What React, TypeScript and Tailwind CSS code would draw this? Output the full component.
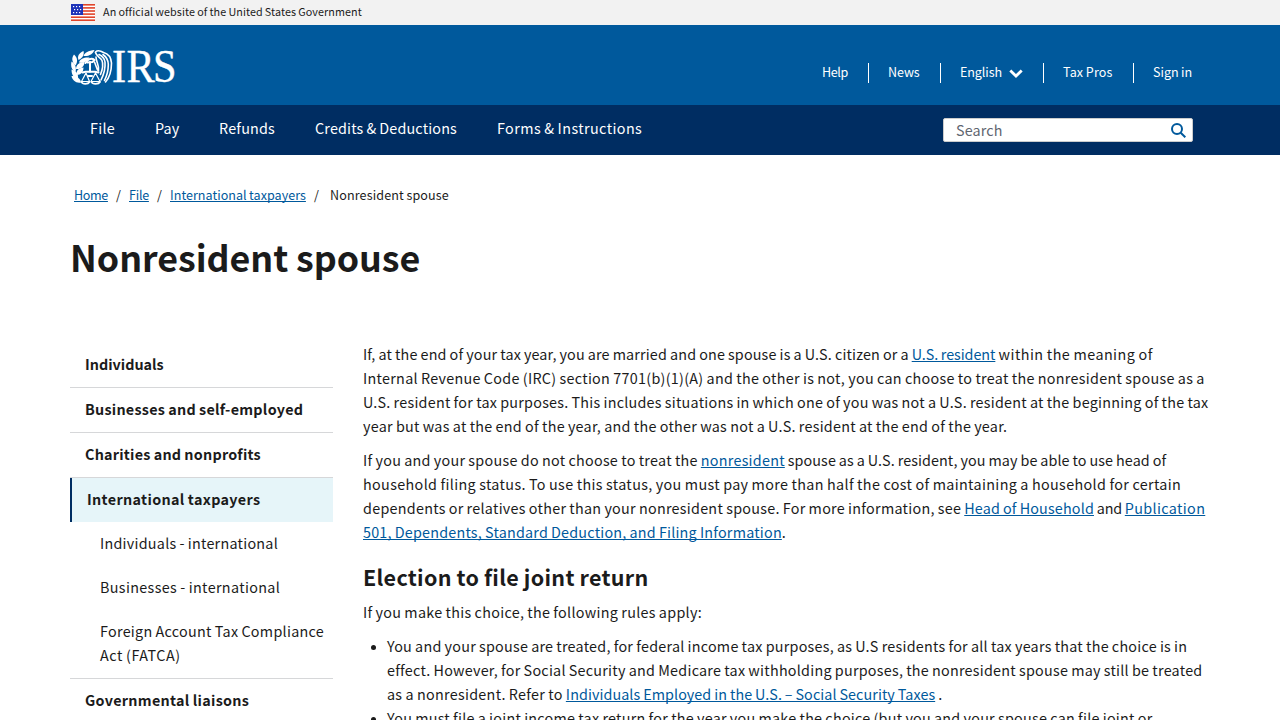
import React from "react";

function Link({ children, t = "" }: { children: React.ReactNode; t?: string }) {
  return (
    <a href="#" className={`text-[#00599c] underline decoration-1 underline-offset-[1px] [text-decoration-skip-ink:none] ${t}`}>
      {children}
    </a>
  );
}

function Line({ children, t = "" }: { children: React.ReactNode; t?: string }) {
  return <span className={`block whitespace-nowrap ${t}`}>{children}</span>;
}

function Flag() {
  return (
    <svg width="24" height="17" viewBox="0 0 24 17">
      <rect width="24" height="17" fill="#fff" />
      {[0, 3.1, 6.2, 9.3, 12.4, 15.4].map((y) => (
        <rect key={y} y={y} width="24" height="1.6" fill="#e0442a" />
      ))}
      <rect width="12" height="11" fill="#1d33b8" />
      {[2, 5, 8].map((y) =>
        [2, 5, 8].map((x) => <rect key={`${x}-${y}`} x={x + (y === 5 ? 1 : 0)} y={y} width="1.2" height="1.2" fill="#fff" />),
      )}
    </svg>
  );
}

function Logo() {
  return (
    <svg className="overflow-visible" width="112" height="44" viewBox="0 0 112 44" fill="none" stroke="#fff" strokeLinecap="round" strokeLinejoin="round">
      <g fill="#fff" stroke="none">
        <path d="M12.500 7c1-3.500 5-5.500 11-6-1.500 4-5.500 6.500-11 6z" />
        <path d="M7.500 11c-1.500-4 .500-7 5-9 1 4-1 7-5 9z" />
        <path d="M8 13.500c1-4 5.500-5.500 10.500-5-2 4-6 6-10.500 5z" />
        <path d="M4.500 16.500C.500 13 .500 8.500 3 5.500c3.500 3 4 7 1.500 11z" />
        <path d="M5 20c0-4 3-7 8.500-7 0 4.500-3.500 7.500-8.500 7z" />
        <path d="M4.500 23C.500 21-.500 17 .500 12.500c4 2.500 5 6 4 10.500z" />
        <path d="M5.500 26c-.500-4.500 2-7 7-7.500 0 4.500-2.500 7.500-7 7.500z" />
        <path d="M7 30c-4.500-1-6.500-4.500-6.500-9.500 5 1.500 7 4.500 6.500 9.500z" />
        <path d="M10 33.500c-5 1-8.500-2-9.500-6.500 5.500 0 9 2.500 9.500 6.500z" />
      </g>
      <g strokeWidth="1.600">
        <path d="M24.500 3c2.500-2.500 5.500-1 8 .500 4 1 7.500 4.500 8 10.500 0 8-1.500 14-6 19" />
        <path d="M24.500 3.500c1 4 5 5 6.500 8 1.500 4 .500 9-1.500 14" />
        <path d="M28 5.500c3 1.500 5.500 3.500 6 7.500.500 6-1.500 13-4 18" />
        <path d="M32 5.500c3.500 2.500 5.300 5 5.300 10 0 6-1.300 11-3.800 16" />
        <path d="M25 8c0 5 3.500 8 2.500 14M23.500 13l3 8" />
        <path d="M14.500 14c1-3.500 6-5.500 9-3l-2 2-5 .500" strokeWidth="2" />
        <path d="M19 13v10M11.500 23.500c3-1.200 12-1.200 16 0M17 27h4" strokeWidth="2" />
        <path d="m15 24-4.500 8.500h8zM24.500 24l-4.500 8.500h9z" strokeWidth="1.200" />
        <path d="M10.500 33c1 2.500 6.500 2.500 8 0M20.500 33c1 2.500 7 2.500 8.500 0" strokeWidth="1.800" />
      </g>
      <text transform="translate(41 33.300) scale(.93 1)" x="0 15.500 44" y="0" fontSize="45.500" fill="#fff" strokeWidth="0.400" fontFamily="Liberation Serif, serif">
        IRS
      </text>
    </svg>
  );
}

const utility = [
  { label: "Help", cls: "w-[46px] tracking-[-0.4px]" },
  { label: "News", cls: "w-[72px] border-l pl-[19px] tracking-[-0.1px]" },
  { label: "English", cls: "w-[103px] border-l pl-[19px] tracking-[-0.1px]", arrow: true },
  { label: "Tax Pros", cls: "w-[90px] border-l pl-[19px] tracking-[0.15px]" },
  { label: "Sign in", cls: "w-[60px] border-l pl-[19px] tracking-[0px]" },
];

const nav = [
  { label: "File", cls: "w-[65px] tracking-[0.3px]" },
  { label: "Pay", cls: "w-[64px] tracking-[0.15px]" },
  { label: "Refunds", cls: "w-[96px] tracking-[0.2px]" },
  { label: "Credits & Deductions", cls: "w-[182px] tracking-[0.16px]" },
  { label: "Forms & Instructions", cls: "w-[160px] tracking-[0.41px]" },
];

export default function App() {
  return (
    <div className="h-[720px] w-[1280px] overflow-hidden bg-white font-['Noto_Sans_CJK_SC',sans-serif] text-[14.35px] leading-6 text-[#1b1b1b] [word-spacing:-0.4px]">
      <div className="flex h-[25px] items-center bg-[#f2f2f2] pl-[71px] text-[10.75px]">
        <Flag />
        <span className="mb-0.5 ml-2 whitespace-nowrap tracking-[0.1px]">An official website of the United States Government</span>
      </div>
      <header className="flex h-20 justify-between bg-[#00599c] pl-[71px] pr-[87px] text-white">
        <div className="pt-6">
          <Logo />
        </div>
        <ul className="flex pt-[38px] text-[12.55px] leading-5">
          {utility.map((u) => (
            <li key={u.label} className={`flex h-5 items-center whitespace-nowrap border-white ${u.cls}`}>
              <span className="mb-0.5">{u.label}</span>
              {u.arrow && (
                <svg className="ml-[7px]" width="14" height="9" viewBox="0 0 14 9" fill="none" stroke="#fff" strokeWidth="2.8">
                  <path d="M1.300 1.500 7 7l5.700-5.500" />
                </svg>
              )}
            </li>
          ))}
        </ul>
      </header>
      <nav className="flex h-[50px] justify-between bg-[#002d62] pl-[90px] pr-[87px] text-white">
        <ul className="flex pt-[11px]">
          {nav.map((n) => (
            <li key={n.label} className={`whitespace-nowrap ${n.cls}`}>
              {n.label}
            </li>
          ))}
        </ul>
        <div className="mt-[13px] flex h-6 w-[250px] items-center justify-between rounded-[2px] border border-[#ccc] bg-white pl-3 pr-1.5 text-[#5f6670]">
          <span className="tracking-[0.15px]">Search</span>
          <svg width="15" height="15" viewBox="0 0 15 15" fill="none" stroke="#00599c" strokeWidth="2">
            <circle cx="6" cy="6" r="5" />
            <path d="m9.700 9.700 4.600 4.600" />
          </svg>
        </div>
      </nav>

      <ol className="flex pl-[74px] pt-[30px] text-[12.55px] leading-5 whitespace-nowrap">
        <li className="w-[42px]"><Link t="tracking-[-0.35px]">Home</Link></li>
        <li className="w-[13px]">/</li>
        <li className="w-[28px]"><Link t="tracking-[-0.25px]">File</Link></li>
        <li className="w-[13px]">/</li>
        <li className="w-[144px]"><Link t="tracking-[0.03px]">International taxpayers</Link></li>
        <li className="w-4">/</li>
        <li className="tracking-[0.13px]">Nonresident spouse</li>
      </ol>
      <h1 className="mt-[29px] pl-[70px] text-[35.8px] font-bold leading-[44px] tracking-[-0.03px] whitespace-nowrap">Nonresident spouse</h1>

      <div className="mt-[65px] flex pl-[70px]">
        <aside className="w-[263px] font-bold whitespace-nowrap">
          <div className="h-[45px] border-b border-[#d6d7d9] pl-[15px] pt-[9px]">Individuals</div>
          <div className="h-[45px] border-b border-[#d6d7d9] pl-[15px] pt-[9px] tracking-[0.26px]">Businesses and self-employed</div>
          <div className="h-[45px] border-b border-[#d6d7d9] pl-[15px] pt-[9px] tracking-[0.23px]">Charities and nonprofits</div>
          <div className="h-11 border-l-2 border-[#002d62] bg-[#e6f5f9] pl-[15px] pt-[9px] tracking-[0.34px]">International taxpayers</div>
          <div className="border-b border-[#d6d7d9] pl-[30px] font-normal">
            <div className="h-11 pt-[9px] tracking-[0.25px]">Individuals - international</div>
            <div className="h-11 pt-[9px] tracking-[0.35px]">Businesses - international</div>
            <div className="h-[68px] pt-[9px]">
              <Line t="tracking-[0.28px]">Foreign Account Tax Compliance</Line>
              <Line t="tracking-[0.5px]">Act (FATCA)</Line>
            </div>
          </div>
          <div className="pl-[15px] pt-[9px] tracking-[0.29px]">Governmental liaisons</div>
        </aside>
        <main className="-mt-px ml-[30px] w-[847px]">
          <p>
            <Line t="tracking-[0.157px]">If, at the end of your tax year, you are married and one spouse is a U.S. citizen or a <Link t="tracking-[-0.06px]">U.S. resident</Link><span className="tracking-[0.45px]"> within the meaning of</span></Line>
            <Line t="tracking-[0.29px]">Internal Revenue Code (IRC) section 7701(b)(1)(A) and the other is not, you can choose to treat the nonresident spouse as a</Line>
            <Line t="tracking-[0.24px]">U.S. resident for tax purposes. This includes situations in which one of you was not a U.S. resident at the beginning of the tax</Line>
            <Line t="tracking-[0.265px]">year but was at the end of the year, and the other was not a U.S. resident at the end of the year.</Line>
          </p>
          <p className="mt-[10px]">
            <Line t="tracking-[0.27px]">If you and your spouse do not choose to treat the <Link t="tracking-[0.25px]">nonresident</Link><span className="tracking-[0.09px]"> spouse as a U.S. resident, you may be able to use head of</span></Line>
            <Line t="tracking-[0.352px]">household filing status. To use this status, you must pay more than half the cost of maintaining a household for certain</Line>
            <Line t="tracking-[0.268px]">dependents or relatives other than your nonresident spouse. For more information, see <Link t="tracking-[0.16px]">Head of Household</Link><span className="tracking-[-0.1px]"> and </span><Link t="tracking-[0.36px]">Publication</Link></Line>
            <Line><Link t="tracking-[0.21px]">501, Dependents, Standard Deduction, and Filing Information</Link>.</Line>
          </p>
          <h2 className="mt-5 text-[21.5px] font-bold leading-[26px] tracking-[0.3px] whitespace-nowrap">Election to file joint return</h2>
          <p className="mt-[10px] tracking-[0.29px]">If you make this choice, the following rules apply:</p>
          <ul className="mt-[10px] list-disc pl-6 marker:text-[12px]">
            <li>
              <Line t="tracking-[0.238px]">You and your spouse are treated, for federal income tax purposes, as U.S residents for all tax years that the choice is in</Line>
              <Line t="tracking-[0.245px]">effect. However, for Social Security and Medicare tax withholding purposes, the nonresident spouse may still be treated</Line>
              <Line t="tracking-[0.29px]">as a nonresident. Refer to <Link t="tracking-[0.07px]">Individuals Employed in the U.S. – Social Security Taxes</Link> .</Line>
            </li>
            <li>
              <Line t="tracking-[0.25px]">You must file a joint income tax return for the year you make the choice (but you and your spouse can file joint or</Line>
            </li>
          </ul>
        </main>
      </div>
    </div>
  );
}
